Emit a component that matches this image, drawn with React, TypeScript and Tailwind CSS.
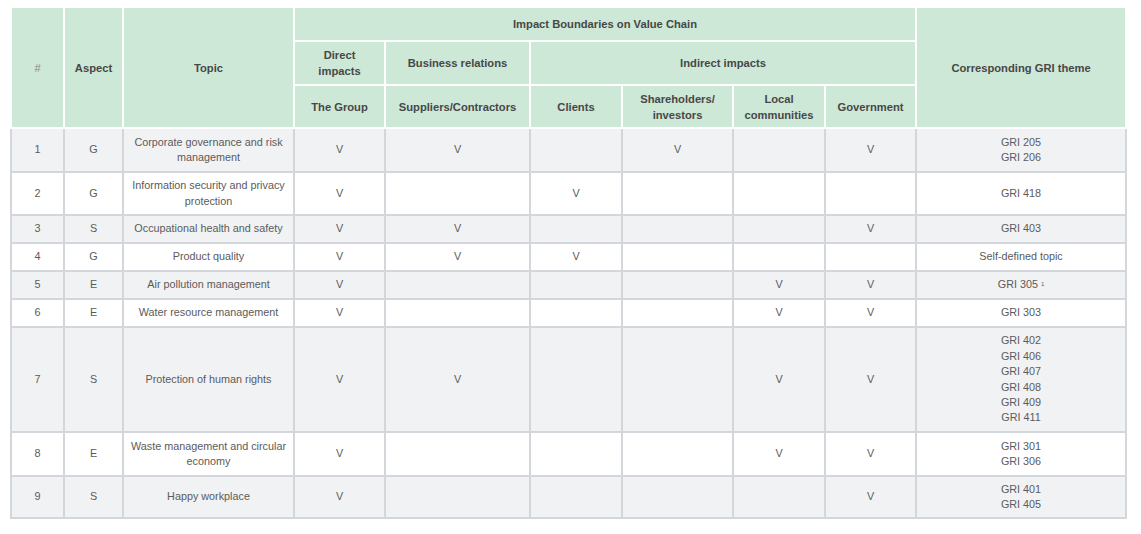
import React from "react";

type Row = {
  n: string;
  a: string;
  topic: React.ReactNode;
  v: boolean[];
  gri: React.ReactNode;
  h: string;
};

const rows: Row[] = [
  { n: "1", a: "G", topic: <>Corporate governance and risk<br />management</>, v: [true, true, false, true, false, true], gri: <>GRI 205<br />GRI 206</>, h: "h-[44px]" },
  { n: "2", a: "G", topic: <>Information security and privacy<br />protection</>, v: [true, false, true, false, false, false], gri: <>GRI 418</>, h: "h-[43px]" },
  { n: "3", a: "S", topic: <>Occupational health and safety</>, v: [true, true, false, false, false, true], gri: <>GRI 403</>, h: "h-[28px]" },
  { n: "4", a: "G", topic: <>Product quality</>, v: [true, true, true, false, false, false], gri: <>Self-defined topic</>, h: "h-[28px]" },
  { n: "5", a: "E", topic: <>Air pollution management</>, v: [true, false, false, false, true, true], gri: <>GRI 305<sup className="text-[6px] ml-[3px] relative -top-[2px]">1</sup></>, h: "h-[28px]" },
  { n: "6", a: "E", topic: <>Water resource management</>, v: [true, false, false, false, true, true], gri: <>GRI 303</>, h: "h-[28px]" },
  { n: "7", a: "S", topic: <>Protection of human rights</>, v: [true, true, false, false, true, true], gri: <>GRI 402<br />GRI 406<br />GRI 407<br />GRI 408<br />GRI 409<br />GRI 411</>, h: "h-[105px]" },
  { n: "8", a: "E", topic: <>Waste management and circular<br />economy</>, v: [true, false, false, false, true, true], gri: <>GRI 301<br />GRI 306</>, h: "h-[44px]" },
  { n: "9", a: "S", topic: <>Happy workplace</>, v: [true, false, false, false, false, true], gri: <>GRI 401<br />GRI 405</>, h: "h-[42px]" },
];

const th = "border-2 border-white bg-[#cde8d7] text-[#474747] font-bold text-[11.2px] leading-[16px] text-center align-middle p-0";
const td = "border-2 border-[#d3d6db] text-[#5b5b5b] text-[10.8px] leading-[15.4px] text-center align-middle p-0";

export default function App() {
  return (
    <div className="bg-white w-[1141px] h-[534px] pt-[6px] pl-[10px]" style={{ fontFamily: '"Liberation Sans", Arial, sans-serif' }}>
      <table className="table-fixed border-collapse w-[1115px]">
        <colgroup>
          <col className="w-[53px]" />
          <col className="w-[59px]" />
          <col className="w-[171px]" />
          <col className="w-[91px]" />
          <col className="w-[145px]" />
          <col className="w-[92px]" />
          <col className="w-[111px]" />
          <col className="w-[92px]" />
          <col className="w-[91px]" />
          <col className="w-[210px]" />
        </colgroup>
        <thead>
          <tr className="h-[34px]">
            <th rowSpan={3} className={th + " !font-normal !text-[#8a8a8a]"}>#</th>
            <th rowSpan={3} className={th}>Aspect</th>
            <th rowSpan={3} className={th}>Topic</th>
            <th colSpan={6} className={th}>Impact Boundaries on Value Chain</th>
            <th rowSpan={3} className={th}>Corresponding GRI theme</th>
          </tr>
          <tr className="h-[44px]">
            <th className={th}>Direct<br />impacts</th>
            <th className={th}>Business relations</th>
            <th colSpan={4} className={th}>Indirect impacts</th>
          </tr>
          <tr className="h-[43px]">
            <th className={th}>The Group</th>
            <th className={th}>Suppliers/Contractors</th>
            <th className={th}>Clients</th>
            <th className={th}>Shareholders/<br />investors</th>
            <th className={th}>Local<br />communities</th>
            <th className={th}>Government</th>
          </tr>
        </thead>
        <tbody>
          {rows.map((r, i) => (
            <tr key={r.n} className={r.h + " " + (i % 2 === 0 ? "bg-[#f1f2f4]" : "bg-white")}>
              <td className={td}>{r.n}</td>
              <td className={td}>{r.a}</td>
              <td className={td}>{r.topic}</td>
              {r.v.map((x, j) => (
                <td key={j} className={td}>{x ? "V" : ""}</td>
              ))}
              <td className={td}>{r.gri}</td>
            </tr>
          ))}
        </tbody>
      </table>
    </div>
  );
}
